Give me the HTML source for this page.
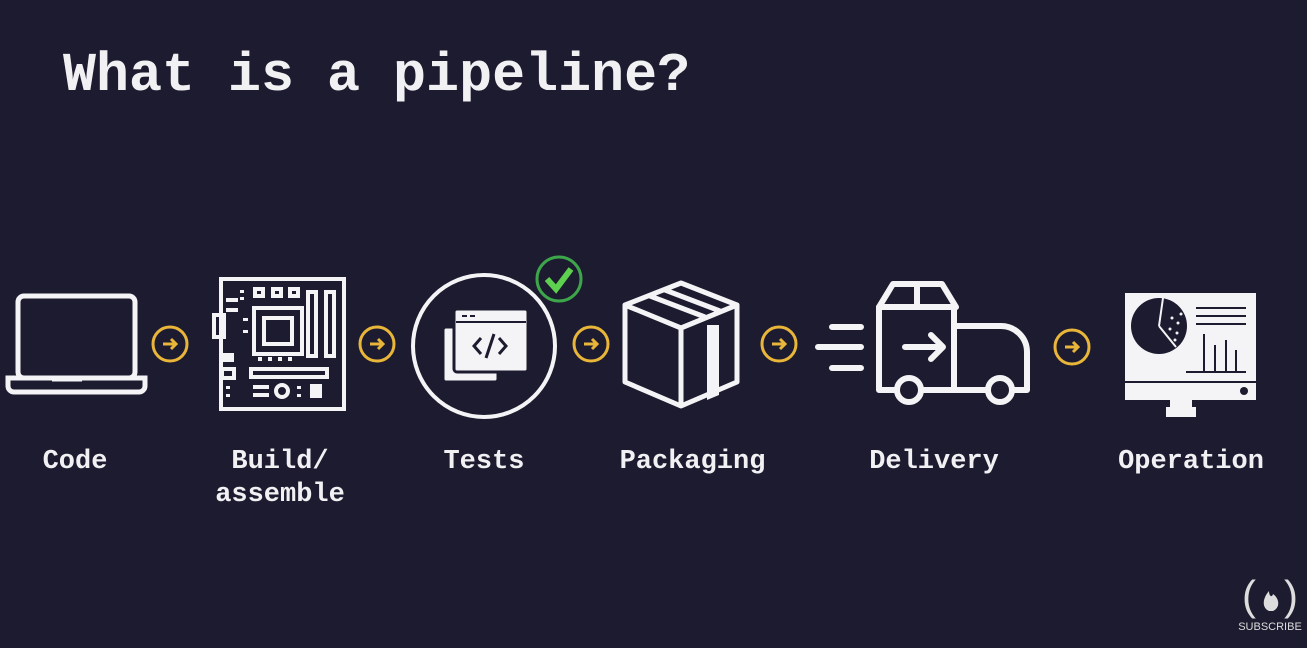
<!DOCTYPE html>
<html><head><style>
body{margin:0;width:1307px;height:648px;background:#1c1b2f;overflow:hidden;position:relative;font-family:"Liberation Mono",monospace;color:#f1f1f4}
.t{position:absolute;left:63px;top:44px;font-size:55px;font-weight:bold;letter-spacing:0px;white-space:nowrap}
.l{position:absolute;font-size:27px;font-weight:bold;text-align:center;white-space:nowrap;line-height:33px}
svg{position:absolute;left:0;top:0}
</style></head><body>
<div class="t">What is a pipeline?</div>
<svg width="1307" height="648" fill="none" stroke="#f4f4f6">
<rect x="18" y="296" width="117" height="82" rx="6" stroke-width="5"/>
<path d="M8 378h137v8a6 6 0 0 1-6 6H14a6 6 0 0 1-6-6z" stroke-width="5"/>
<path d="M52 380h30" stroke-width="3"/>
<g stroke="#e9b63a" stroke-width="3">
<circle cx="170" cy="344" r="17"/><circle cx="377" cy="344" r="17"/><circle cx="591" cy="344" r="17"/><circle cx="779" cy="344" r="17"/><circle cx="1072" cy="347" r="17"/>
<path d="M163 344h13m-5-5l5 5-5 5M370 344h13m-5-5l5 5-5 5M584 344h13m-5-5l5 5-5 5M772 344h13m-5-5l5 5-5 5M1065 347h13m-5-5l5 5-5 5"/>
</g>
<g stroke-width="4">
<rect x="221" y="279" width="123" height="130"/>
<rect x="254" y="308" width="48" height="46"/><rect x="264" y="318" width="28" height="26"/>
<rect x="255" y="289" width="8" height="7"/><rect x="273" y="289" width="8" height="7"/><rect x="290" y="289" width="8" height="7"/>
<rect x="214" y="315" width="10" height="22"/>
<rect x="308" y="292" width="8" height="64"/><rect x="326" y="292" width="8" height="64"/>
<rect x="222" y="369" width="12" height="9"/><rect x="251" y="369" width="76" height="8"/>
<rect x="276" y="385" width="12" height="12" rx="6"/><path d="M253 387h16M253 395h16M226 300h12M226 310h12"/>
</g>
<g fill="#f4f4f6" stroke="none"><rect x="240" y="290" width="4" height="3"/><rect x="240" y="297" width="4" height="3"/><rect x="243" y="330" width="5" height="3"/><rect x="243" y="318" width="5" height="3"/><rect x="258" y="357" width="4" height="4"/><rect x="268" y="357" width="4" height="4"/><rect x="278" y="357" width="4" height="4"/><rect x="288" y="357" width="4" height="4"/><rect x="226" y="386" width="4" height="3"/><rect x="226" y="394" width="4" height="3"/><rect x="297" y="386" width="4" height="3"/><rect x="297" y="394" width="4" height="3"/><rect x="310" y="384" width="12" height="14"/><rect x="222" y="353" width="12" height="9"/></g>
<circle cx="484" cy="346" r="71" stroke-width="4"/>
<rect x="443" y="327" width="55" height="55" rx="3" fill="#f4f4f6" stroke="#1c1b2f" stroke-width="3"/>
<rect x="454" y="309" width="74" height="63" rx="3" fill="#f4f4f6" stroke="#1c1b2f" stroke-width="3"/>
<path d="M456 322h70M462 316h5m3 0h5" stroke="#1c1b2f" stroke-width="2"/>
<path d="M481 338l-7 8 7 8M499 338l7 8-7 8M494 334l-8 24" stroke="#1c1b2f" stroke-width="3"/>
<circle cx="559" cy="279" r="22" stroke="#3ea64a" stroke-width="3"/>
<path d="M547 279l9 10 15-20" stroke="#5ed04f" stroke-width="6"/>
<g stroke-width="5" stroke-linejoin="round">
<path d="M681 283l56 22v77l-56 24-56-24v-77z"/><path d="M625 305l56 23 56-23M681 328v78"/>
<path d="M650 296l55 21M665 290l55 21"/></g>
<path d="M707 325h12v70l-12 5z" fill="#f4f4f6" stroke="none"/>
<g stroke-width="6" stroke-linecap="round" stroke-linejoin="round">
<path d="M832 327h29M818 347h43M832 368h29"/>
<path d="M879 307l14-23h49l14 23z"/><path d="M917 284v23"/>
<path d="M879 307h75v19h47a26 26 0 0 1 26 26v38h-148z"/>
<path d="M954 326v64"/><path d="M905 347h38m-12-12l12 12-12 12"/>
<circle cx="909" cy="390" r="12" fill="#1c1b2f"/><circle cx="1000" cy="390" r="12" fill="#1c1b2f"/>
</g>
<rect x="1125" y="293" width="131" height="107" fill="#f4f4f6" stroke="none"/>
<rect x="1170" y="400" width="22" height="10" fill="#f4f4f6" stroke="none"/>
<rect x="1166" y="407" width="30" height="10" fill="#f4f4f6" stroke="none"/>
<path d="M1125 382h131" stroke="#1c1b2f" stroke-width="2"/>
<circle cx="1244" cy="391" r="4" fill="#1c1b2f" stroke="none"/>
<circle cx="1159" cy="326" r="28" fill="#1c1b2f" stroke="none"/>
<path d="M1159 326l4-28M1159 326l17 21" stroke="#f4f4f6" stroke-width="2"/>
<g fill="#f4f4f6" stroke="none"><circle cx="1172" cy="318" r="1.5"/><circle cx="1178" cy="323" r="1.5"/><circle cx="1170" cy="329" r="1.5"/><circle cx="1177" cy="333" r="1.5"/><circle cx="1181" cy="314" r="1.5"/><circle cx="1175" cy="340" r="1.5"/></g>
<g stroke="#1c1b2f" stroke-width="2"><path d="M1196 308h50M1196 316h50M1196 324h50M1186 372h60M1204 334v37M1215 345v26M1226 340v31M1236 350v21"/></g>
<g fill="#ddd" stroke="none" font-family="Liberation Sans" font-size="42">
<text x="1242" y="610">(</text><text x="1284" y="610">)</text>
<text x="1270" y="630" font-size="11" text-anchor="middle">SUBSCRIBE</text></g>
<path d="M1269 611c-7-3-7-12 0-20c0 5 3 7 4 3c7 5 7 14 0 17z" fill="#ddd" stroke="none"/>
</svg>
<div class="l" style="left:25px;top:446px;width:100px">Code</div>
<div class="l" style="left:200px;top:446px;width:160px">Build/<br>assemble</div>
<div class="l" style="left:424px;top:446px;width:120px">Tests</div>
<div class="l" style="left:610px;top:446px;width:165px">Packaging</div>
<div class="l" style="left:854px;top:446px;width:160px">Delivery</div>
<div class="l" style="left:1106px;top:446px;width:170px">Operation</div>
</body></html>
